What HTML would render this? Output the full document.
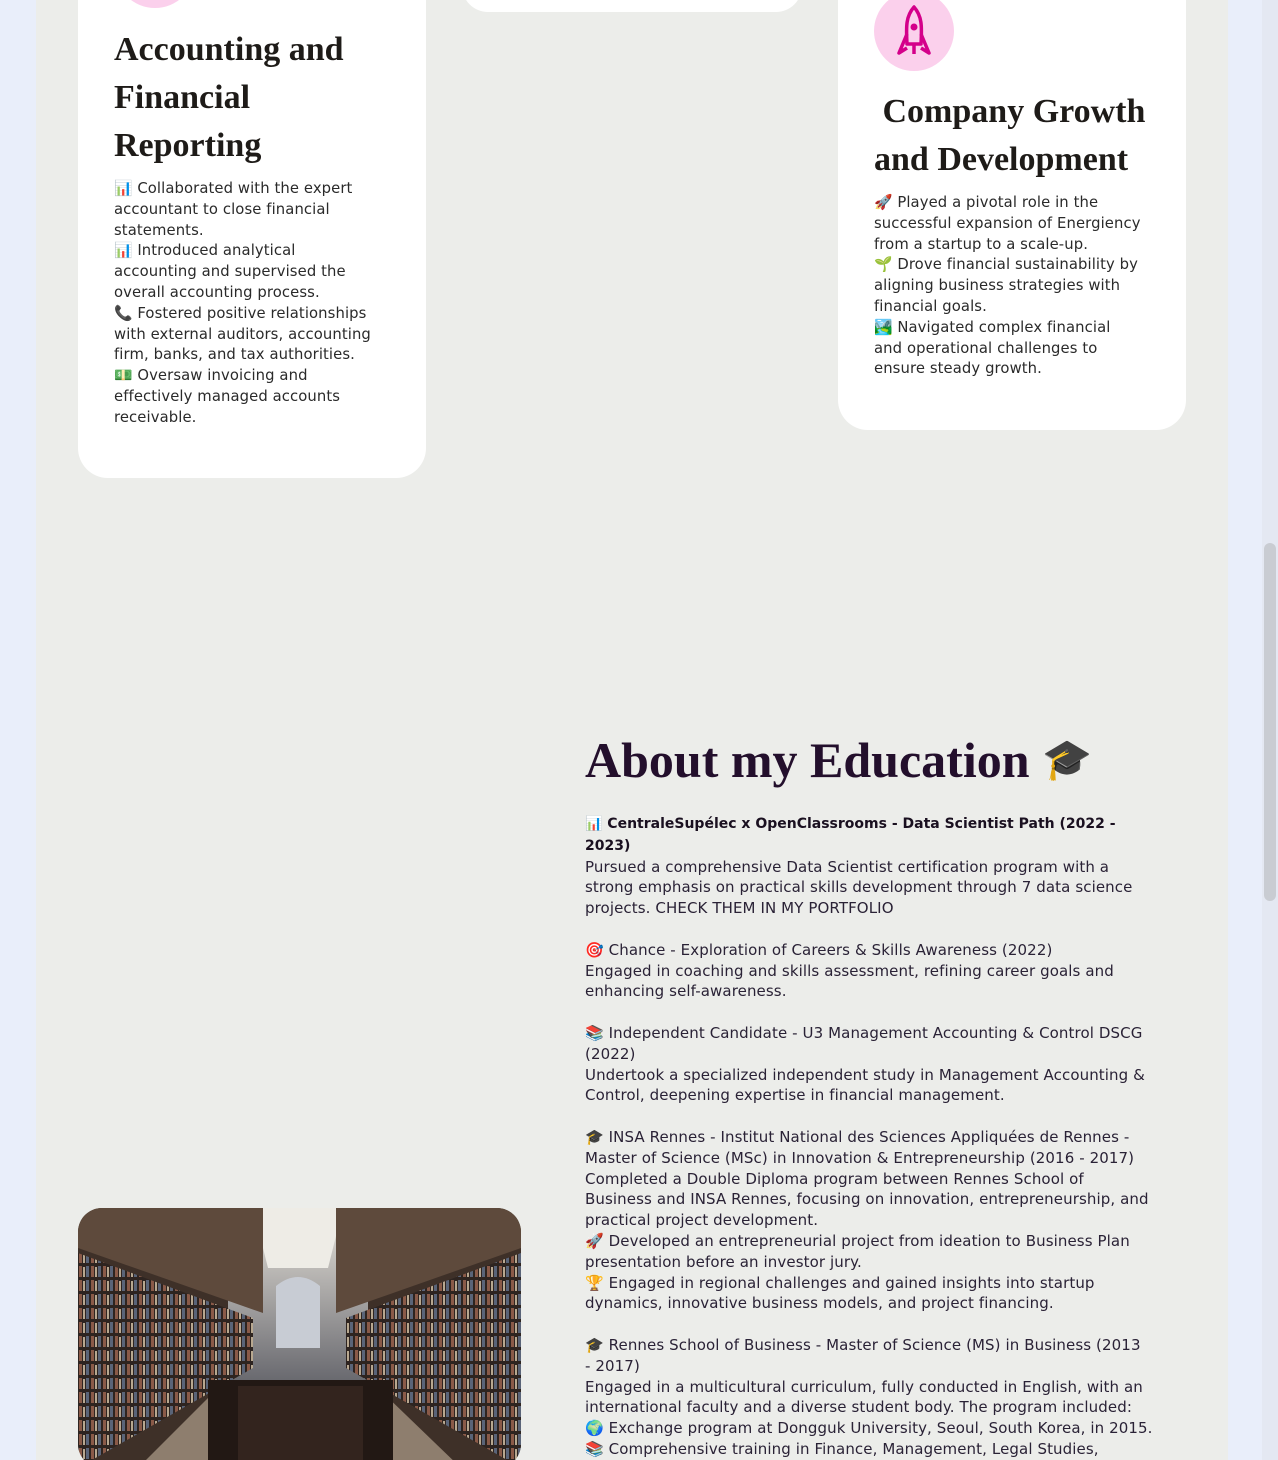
<!DOCTYPE html>
<html><head><meta charset="utf-8"><style>
*{margin:0;padding:0;box-sizing:border-box}
html,body{width:1278px;height:1460px;overflow:hidden}
body{background:#e9eefa;position:relative;font-family:"DejaVu Sans","Liberation Sans",sans-serif;color:#2a2a2a}
.col{position:absolute;left:36px;top:0;width:1192px;height:1460px;background:#ecedea}
.sb{position:absolute;left:1262px;top:0;width:16px;height:1460px;background:#e4e8f2}
.thumb{position:absolute;left:1264px;top:543px;width:12px;height:358px;background:#c9ccd2;border-radius:6px}
.card{position:absolute;background:#fff;border-radius:30px}
.circ{position:absolute;border-radius:50%;background:#fbd0ec}
h3{font-family:"Liberation Serif","DejaVu Serif",serif;font-weight:bold;font-size:34px;line-height:48px;color:#1e1b18;position:absolute;white-space:nowrap}
.t{position:absolute;font-size:14.8px;line-height:20.8px;color:#2a2a2a;white-space:nowrap;letter-spacing:0.1px}
h2{position:absolute;left:585px;top:727px;font-family:"Liberation Serif","DejaVu Serif",serif;font-weight:bold;font-size:50px;line-height:66px;color:#230f2c;white-space:nowrap}
h2 span{font-size:40px;vertical-align:4px}
.e{position:absolute;left:585px;top:813px;font-size:15px;line-height:20.8px;color:#2a2236;white-space:nowrap;letter-spacing:0.1px}
.e b{font-size:14px;letter-spacing:0}
.img{position:absolute;left:78px;top:1208px;width:443px;height:260px;border-radius:24px;overflow:hidden}
</style></head><body>
<div class="col"></div>
<div class="sb"></div><div class="thumb"></div>

<div class="card" style="left:78px;top:-40px;width:348px;height:518px"></div>
<div class="circ" style="left:115px;top:-72px;width:80px;height:80px"></div>
<h3 style="left:114px;top:26px">Accounting and<br>Financial<br>Reporting</h3>
<div class="t" style="left:114px;top:179px">📊 Collaborated with the expert<br>accountant to close financial<br>statements.<br>📊 Introduced analytical<br>accounting and supervised the<br>overall accounting process.<br>📞 Fostered positive relationships<br>with external auditors, accounting<br>firm, banks, and tax authorities.<br>💵 Oversaw invoicing and<br>effectively managed accounts<br>receivable.</div>

<div class="card" style="left:462px;top:-40px;width:340px;height:52px"></div>

<div class="card" style="left:838px;top:-40px;width:348px;height:470px"></div>
<div class="circ" style="left:874px;top:-9px;width:80px;height:80px"></div>
<svg style="position:absolute;left:894px;top:4px" width="40" height="52" viewBox="0 0 40 52"><g fill="none" stroke="#d4008a" stroke-width="3.5" stroke-linejoin="round"><path d="M20 3 C12 12 12 22 13 40 L27 40 C28 22 28 12 20 3Z"/><path d="M13 30 L5 49 L13 44 M27 30 L35 49 L27 44"/><path d="M20 40 L20 50"/></g><circle cx="20" cy="23" r="3.5" fill="#d4008a"/></svg>
<h3 style="left:874px;top:88px">&nbsp;Company Growth<br>and Development</h3>
<div class="t" style="left:874px;top:193px">🚀 Played a pivotal role in the<br>successful expansion of Energiency<br>from a startup to a scale-up.<br>🌱 Drove financial sustainability by<br>aligning business strategies with<br>financial goals.<br>🏞️ Navigated complex financial<br>and operational challenges to<br>ensure steady growth.</div>

<h2>About my Education <span>🎓</span></h2>
<div class="e"><b style="color:#1a1020">📊 CentraleSupélec x OpenClassrooms - Data Scientist Path (2022 -<br>2023)</b><br>Pursued a comprehensive Data Scientist certification program with a<br>strong emphasis on practical skills development through 7 data science<br>projects. CHECK THEM IN MY PORTFOLIO<br><br>🎯 Chance - Exploration of Careers &amp; Skills Awareness (2022)<br>Engaged in coaching and skills assessment, refining career goals and<br>enhancing self-awareness.<br><br>📚 Independent Candidate - U3 Management Accounting &amp; Control DSCG<br>(2022)<br>Undertook a specialized independent study in Management Accounting &amp;<br>Control, deepening expertise in financial management.<br><br>🎓 INSA Rennes - Institut National des Sciences Appliquées de Rennes -<br>Master of Science (MSc) in Innovation &amp; Entrepreneurship (2016 - 2017)<br>Completed a Double Diploma program between Rennes School of<br>Business and INSA Rennes, focusing on innovation, entrepreneurship, and<br>practical project development.<br>🚀 Developed an entrepreneurial project from ideation to Business Plan<br>presentation before an investor jury.<br>🏆 Engaged in regional challenges and gained insights into startup<br>dynamics, innovative business models, and project financing.<br><br>🎓 Rennes School of Business - Master of Science (MS) in Business (2013<br>- 2017)<br>Engaged in a multicultural curriculum, fully conducted in English, with an<br>international faculty and a diverse student body. The program included:<br>🌍 Exchange program at Dongguk University, Seoul, South Korea, in 2015.<br>📚 Comprehensive training in Finance, Management, Legal Studies,</div>

<div class="img"><svg width="443" height="260" viewBox="0 0 443 260">
<defs><linearGradient id="c" x1="0" y1="0" x2="0" y2="1"><stop offset="0" stop-color="#e8e4dc"/><stop offset="1" stop-color="#55565e"/></linearGradient>
<pattern id="bk" width="12" height="14" patternUnits="userSpaceOnUse"><rect width="12" height="14" fill="#2e2420"/><rect x="1" y="2" width="3" height="11" fill="#8a5a48"/><rect x="5" y="3" width="2" height="10" fill="#b8a890"/><rect x="8" y="2" width="3" height="11" fill="#5a6478"/></pattern></defs>
<rect width="443" height="260" fill="#3e3028"/>
<rect x="150" y="0" width="140" height="200" fill="url(#c)"/>
<path d="M175 0 L265 0 L250 60 L190 60Z" fill="#eeece6"/>
<path d="M0 0 L185 0 L185 105 L0 40Z" fill="#5e4a3c"/>
<path d="M443 0 L258 0 L258 105 L443 40Z" fill="#5e4a3c"/>
<path d="M0 45 L175 110 L175 160 L0 260Z" fill="url(#bk)"/>
<path d="M443 45 L268 110 L268 160 L443 260Z" fill="url(#bk)"/>
<path d="M198 78 Q220 60 242 78 L242 140 L198 140Z" fill="#c8ccd4"/>
<path d="M60 260 L140 180 L180 175 L180 260Z" fill="#8e7e6e"/>
<path d="M383 260 L300 180 L262 175 L262 260Z" fill="#8e7e6e"/>
<rect x="130" y="172" width="185" height="90" fill="#221814"/>
<rect x="160" y="178" width="125" height="84" fill="#33241e"/>
</svg></div>
</body></html>
